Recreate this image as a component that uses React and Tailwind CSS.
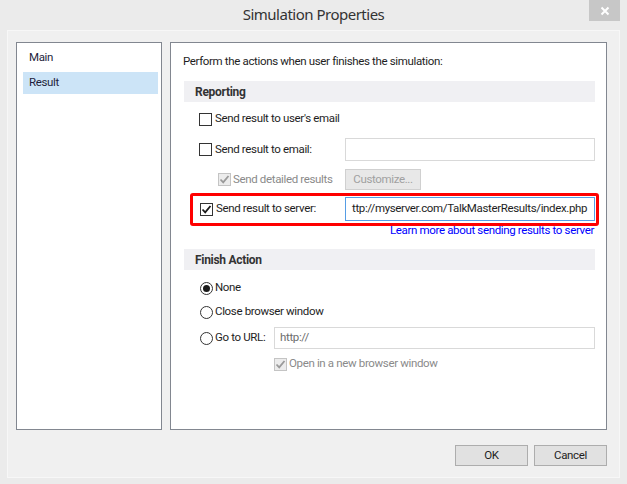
import React from "react";

const FONT = "font-['Roboto',sans-serif]";

function Check({ checked = false, disabled = false }) {
  return (
    <span
      className={`flex h-[13px] w-[13px] shrink-0 items-center justify-center border ${
        disabled ? "border-[#c4c4c4] bg-[#ececec]" : "border-[#333333] bg-white"
      }`}
    >
      {checked && (
        <svg width="11" height="11" viewBox="0 0 11 11">
          <path
            d="M1.5 5.5 L4.2 8.3 L9.5 2"
            fill="none"
            stroke={disabled ? "#9a9a9a" : "#1a1a1a"}
            strokeWidth="1.8"
          />
        </svg>
      )}
    </span>
  );
}

function Radio({ checked = false }) {
  return (
    <span className="flex h-[13px] w-[13px] shrink-0 items-center justify-center rounded-full border border-[#333333] bg-white">
      {checked && <span className="h-[7px] w-[7px] rounded-full bg-[#1a1a1a]" />}
    </span>
  );
}

function Header({ children }) {
  return (
    <div className="flex h-[21px] items-center bg-[#f0f0f3] pl-[11px] text-[12px] font-bold tracking-[-0.3px] text-[#333333]">
      {children}
    </div>
  );
}

export default function App() {
  return (
    <div
      className={`${FONT} relative flex h-[484px] w-[627px] flex-col bg-[#ebebeb] px-[7px] pb-[6px] text-[11.5px] tracking-[-0.35px] text-[#1e1e1e]`}
    >
      {/* Title bar */}
      <div className="flex h-[30px] items-center justify-center pb-[1px] font-['Noto_Sans',sans-serif] text-[15px] tracking-[-0.5px] text-[#333333]">
        Simulation Properties
      </div>
      <div className="absolute right-[7px] top-0 flex h-[21px] w-[31px] items-center justify-center bg-[#c7c7c7]">
        <svg width="10" height="10" viewBox="0 0 10 10">
          <path d="M1.5 1.5 L8.5 8.5 M8.5 1.5 L1.5 8.5" stroke="#ffffff" strokeWidth="2" />
        </svg>
      </div>

      {/* Client area */}
      <div className="flex flex-1 flex-col border border-[#f7f7f7] bg-[#f0f0f0] pb-[10px] pl-[8px] pr-[12px] pt-[11px]">
        <div className="flex h-[388px] gap-[8px]">
          {/* Left list */}
          <div className="flex w-[146px] shrink-0 flex-col border border-[#828790] bg-white pl-[6px] pr-[3px] pt-[4px]">
            <div className="flex h-[21px] items-center pl-[6px] text-[#1e1e3c]">Main</div>
            <div className="mt-[4px] flex h-[22px] items-center bg-[#cce4f7] pl-[6px] text-[#1e1e3c]">Result</div>
          </div>

          {/* Right panel */}
          <div className="flex w-[437px] shrink-0 flex-col border border-[#828790] bg-white pl-[13px] pr-[11px] pt-[11px]">
            <div className="-ml-[1px] flex h-[16px] items-center">
              Perform the actions when user finishes the simulation:
            </div>
            <div className="mt-[11px]">
              <Header>Reporting</Header>
            </div>

            {/* Row 1 */}
            <div className="mt-[7px] flex h-[20px] items-center gap-[3px] pl-[15px]">
              <Check />
              <span>Send result to user's email</span>
            </div>

            {/* Row 2 */}
            <div className="mt-[9px] flex h-[23px] items-center">
              <div className="flex w-[161px] shrink-0 items-center gap-[3px] pl-[15px]">
                <Check />
                <span>Send result to email:</span>
              </div>
              <div className="h-[23px] flex-1 border border-[#d9d9d9] bg-white" />
            </div>

            {/* Row 3 */}
            <div className="mt-[8px] flex h-[21px] items-center">
              <div className="flex w-[161px] shrink-0 items-center gap-[2px] pl-[34px] text-[#8a8a8a]">
                <Check checked disabled />
                <span>Send detailed results</span>
              </div>
              <div className="flex h-[21px] w-[76px] items-center justify-center border border-[#d0d0d0] bg-[#e8e8e8] text-[#a0a0a0]">
                Customize...
              </div>
            </div>

            {/* Row 4 highlighted */}
            <div className="-mr-[4px] ml-[6px] mt-[3px] flex h-[33px] items-start rounded-[3px] border-[3px] border-[#ff0000] pt-[1px]">
              <div className="flex h-[24px] w-[152px] shrink-0 items-center gap-[3px] pl-[7px]">
                <Check checked />
                <span>Send result to server:</span>
              </div>
              <div className="mr-[1px] flex h-[24px] min-w-0 flex-1 items-center overflow-hidden whitespace-nowrap border border-[#569de5] bg-white pl-[6px]">
                ttp://myserver.com/TalkMasterResults/index.php
              </div>
            </div>

            <div className="-mt-[3px] flex h-[16px] items-center justify-end pr-[1px] text-[#0000ff]">
              Learn more about sending results to server
            </div>

            <div className="mt-[10px]">
              <Header>Finish Action</Header>
            </div>

            <div className="mt-[8px] flex h-[20px] items-center gap-[2px] pl-[16px]">
              <Radio checked />
              <span>None</span>
            </div>
            <div className="mt-[4px] flex h-[20px] items-center gap-[2px] pl-[16px]">
              <Radio />
              <span>Close browser window</span>
            </div>
            <div className="mt-[5px] flex h-[22px] items-center">
              <div className="flex w-[90px] shrink-0 items-center gap-[2px] pl-[16px]">
                <Radio />
                <span>Go to URL:</span>
              </div>
              <div className="flex h-[22px] flex-1 items-center border border-[#d9d9d9] bg-white pl-[5px] text-[#6d6d6d]">
                http://
              </div>
            </div>
            <div className="mt-[5px] flex h-[20px] items-center gap-[2px] pl-[90px] text-[#8a8a8a]">
              <Check checked disabled />
              <span>Open in a new browser window</span>
            </div>
          </div>
        </div>

        {/* Buttons */}
        <div className="mt-[15px] flex justify-end gap-[6px]">
          <div className="flex h-[21px] w-[73px] items-center justify-center border border-[#adadad] bg-[#e1e1e1]">
            OK
          </div>
          <div className="flex h-[21px] w-[73px] items-center justify-center border border-[#adadad] bg-[#e1e1e1]">
            Cancel
          </div>
        </div>
      </div>
    </div>
  );
}
